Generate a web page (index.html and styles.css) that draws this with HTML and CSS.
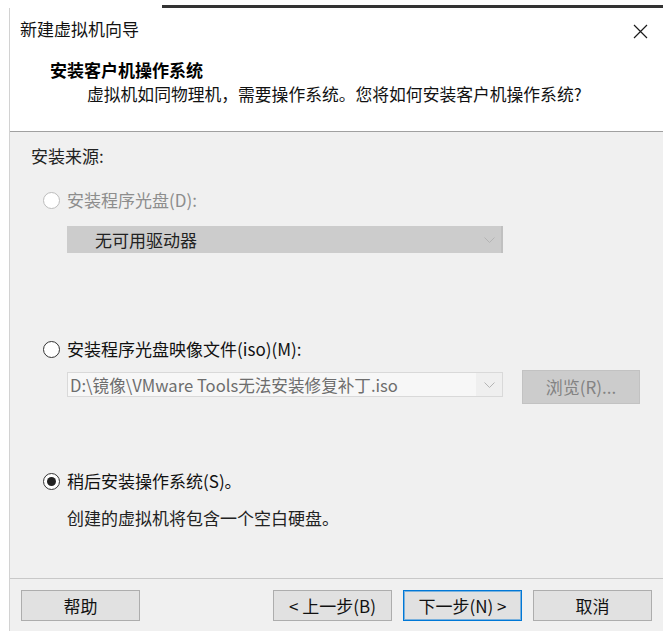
FILE: index.html
```html
<!DOCTYPE html>
<html lang="zh-CN">
<head>
<meta charset="utf-8">
<title>新建虚拟机向导</title>
<link rel="stylesheet" href="styles.css">
</head>
<body>
<div class="screen">
  <div class="topstrip"><div class="topgap"></div><div class="topbar"></div></div>
  <div class="dialog">
    <div class="header">
      <div class="titlebar">
        <span class="title">新建虚拟机向导</span>
        <svg class="close" width="15" height="15" viewBox="0 0 15 15"><path d="M1 1 L14 14 M14 1 L1 14" stroke="#1a1a1a" stroke-width="1.2" fill="none"/></svg>
      </div>
      <div class="heading">安装客户机操作系统</div>
      <div class="subtitle">虚拟机如同物理机，需要操作系统。您将如何安装客户机操作系统?</div>
    </div>
    <div class="body">
      <div class="section-label">安装来源:</div>
      <div class="radio-row r1 disabled"><span class="radio"></span><span class="rlabel">安装程序光盘(D):</span></div>
      <div class="select disabled-select">
        <span class="select-text">无可用驱动器</span>
        <svg class="chev" width="11" height="6" viewBox="0 0 11 6"><path d="M0.5 0.5 L5.5 5.5 L10.5 0.5" stroke="#b4b4b4" fill="none"/></svg>
      </div>
      <div class="radio-row r2"><span class="radio"></span><span class="rlabel">安装程序光盘映像文件(iso)(M):</span></div>
      <div class="iso-row">
        <div class="combo">
          <span class="combo-text">D:\镜像\VMware Tools无法安装修复补丁.iso</span>
          <span class="combo-btn"><svg width="11" height="6" viewBox="0 0 11 6"><path d="M0.5 0.5 L5.5 5.5 L10.5 0.5" stroke="#b4b4b4" fill="none"/></svg></span>
        </div>
        <div class="browse">浏览(R)...</div>
      </div>
      <div class="radio-row r3"><span class="radio checked"></span><span class="rlabel">稍后安装操作系统(S)。</span></div>
      <div class="desc">创建的虚拟机将包含一个空白硬盘。</div>
    </div>
    <div class="footer">
      <div class="btn help">帮助</div>
      <div class="nav">
        <div class="btn">&lt; 上一步(B)</div>
        <div class="btn primary">下一步(N) &gt;</div>
        <div class="btn cancel">取消</div>
      </div>
    </div>
  </div>
</div>
</body>
</html>
```

FILE: styles.css
```css
* { box-sizing: border-box; }
html, body { margin: 0; padding: 0; }
body {
  background: #ffffff;
  font-family: "Noto Sans CJK SC", "Noto Sans", sans-serif;
  color: #000;
  width: 663px;
  height: 631px;
  overflow: hidden;
}
.screen { display: flex; flex-direction: column; width: 663px; height: 631px; }
.topstrip { height: 8px; display: flex; background: #fff; }
.topgap { width: 162px; }
.topbar { flex: 1; margin-top: 5px; height: 3px; background: #333; }

.dialog {
  flex: 1;
  margin-left: 9px;
  border-left: 1px solid #d2d2d2;
  display: flex;
  flex-direction: column;
  background: #f0f0f0;
}
.header {
  height: 124px;
  background: #fff;
  border-bottom: 1px solid #a0a0a0;
  display: flex;
  flex-direction: column;
}
.titlebar {
  display: flex;
  align-items: center;
  justify-content: space-between;
  padding: 10px 15px 0 10px;
  height: 32px;
}
.title { font-size: 17px; line-height: 22px; color: #111; }
.close { margin-top: 5px; }
.heading {
  margin-top: 19px;
  padding-left: 40px;
  font-size: 17px;
  line-height: 22px;
  font-weight: bold;
  color: #000;
}
.subtitle {
  margin-top: 2px;
  padding-left: 77px;
  font-size: 16.8px;
  line-height: 22px;
  color: #111;
}

.body {
  flex: 1;
  padding: 13px 0 0 21px;
  display: flex;
  flex-direction: column;
  font-size: 17px;
  line-height: 22px;
}
.section-label { color: #222; }
.radio-row { display: flex; align-items: center; height: 22px; padding-left: 12px; }
.r1 { margin-top: 22px; }
.r2 { margin-top: 85px; }
.r3 { margin-top: 66px; }
.radio {
  width: 17px;
  height: 17px;
  border-radius: 50%;
  border: 1px solid #333;
  background: #fff;
  margin-right: 7px;
  display: flex;
  align-items: center;
  justify-content: center;
  flex: none;
}
.radio.checked::after {
  content: "";
  width: 9px;
  height: 9px;
  border-radius: 50%;
  background: #222;
}
.disabled .radio { border-color: #bcbcbc; }
.disabled .rlabel { color: #8d8d8d; }
.rlabel { color: #111; }

.select {
  margin-top: 15px;
  margin-left: 36px;
  width: 436px;
  height: 27px;
  display: flex;
  align-items: center;
  justify-content: space-between;
  padding: 0 6px 0 28px;
}
.disabled-select {
  background: #cccccc;
  border-right: 2px solid #c0c0c0;
}
.select-text { color: #222; }

.iso-row { display: flex; margin-top: 10px; margin-left: 36px; }
.combo {
  margin-top: 2px;
  width: 436px;
  height: 25px;
  background: #f7f7f7;
  border: 1px solid #d9d9d9;
  display: flex;
  align-items: center;
}
.combo-text { flex: 1; padding-left: 2px; color: #6d6d6d; white-space: nowrap; overflow: hidden; font-size: 16.6px; }
.combo-btn {
  width: 26px;
  height: 100%;
  background: #efefef;
  display: flex;
  align-items: center;
  justify-content: center;
}
.browse {
  margin-left: 19px;
  width: 118px;
  height: 34px;
  background: #cccccc;
  border: 1px solid #c2c2c2;
  color: #838383;
  display: flex;
  align-items: center;
  justify-content: center;
}
.desc { margin-top: 15px; margin-left: 36px; color: #222; }

.footer {
  height: 53px;
  border-top: 1px solid #c8c8c8;
  padding: 11px 11px 10px 11px;
  display: flex;
  justify-content: space-between;
}
.nav { display: flex; gap: 11px; }
.btn {
  width: 119px;
  height: 31px;
  background: #e1e1e1;
  border: 1px solid #adadad;
  display: flex;
  align-items: center;
  justify-content: center;
  font-size: 17px;
  color: #111;
}
.btn.primary { border-color: #0078d7; box-shadow: inset 0 0 0 1px rgba(0,120,215,0.45); }
```
